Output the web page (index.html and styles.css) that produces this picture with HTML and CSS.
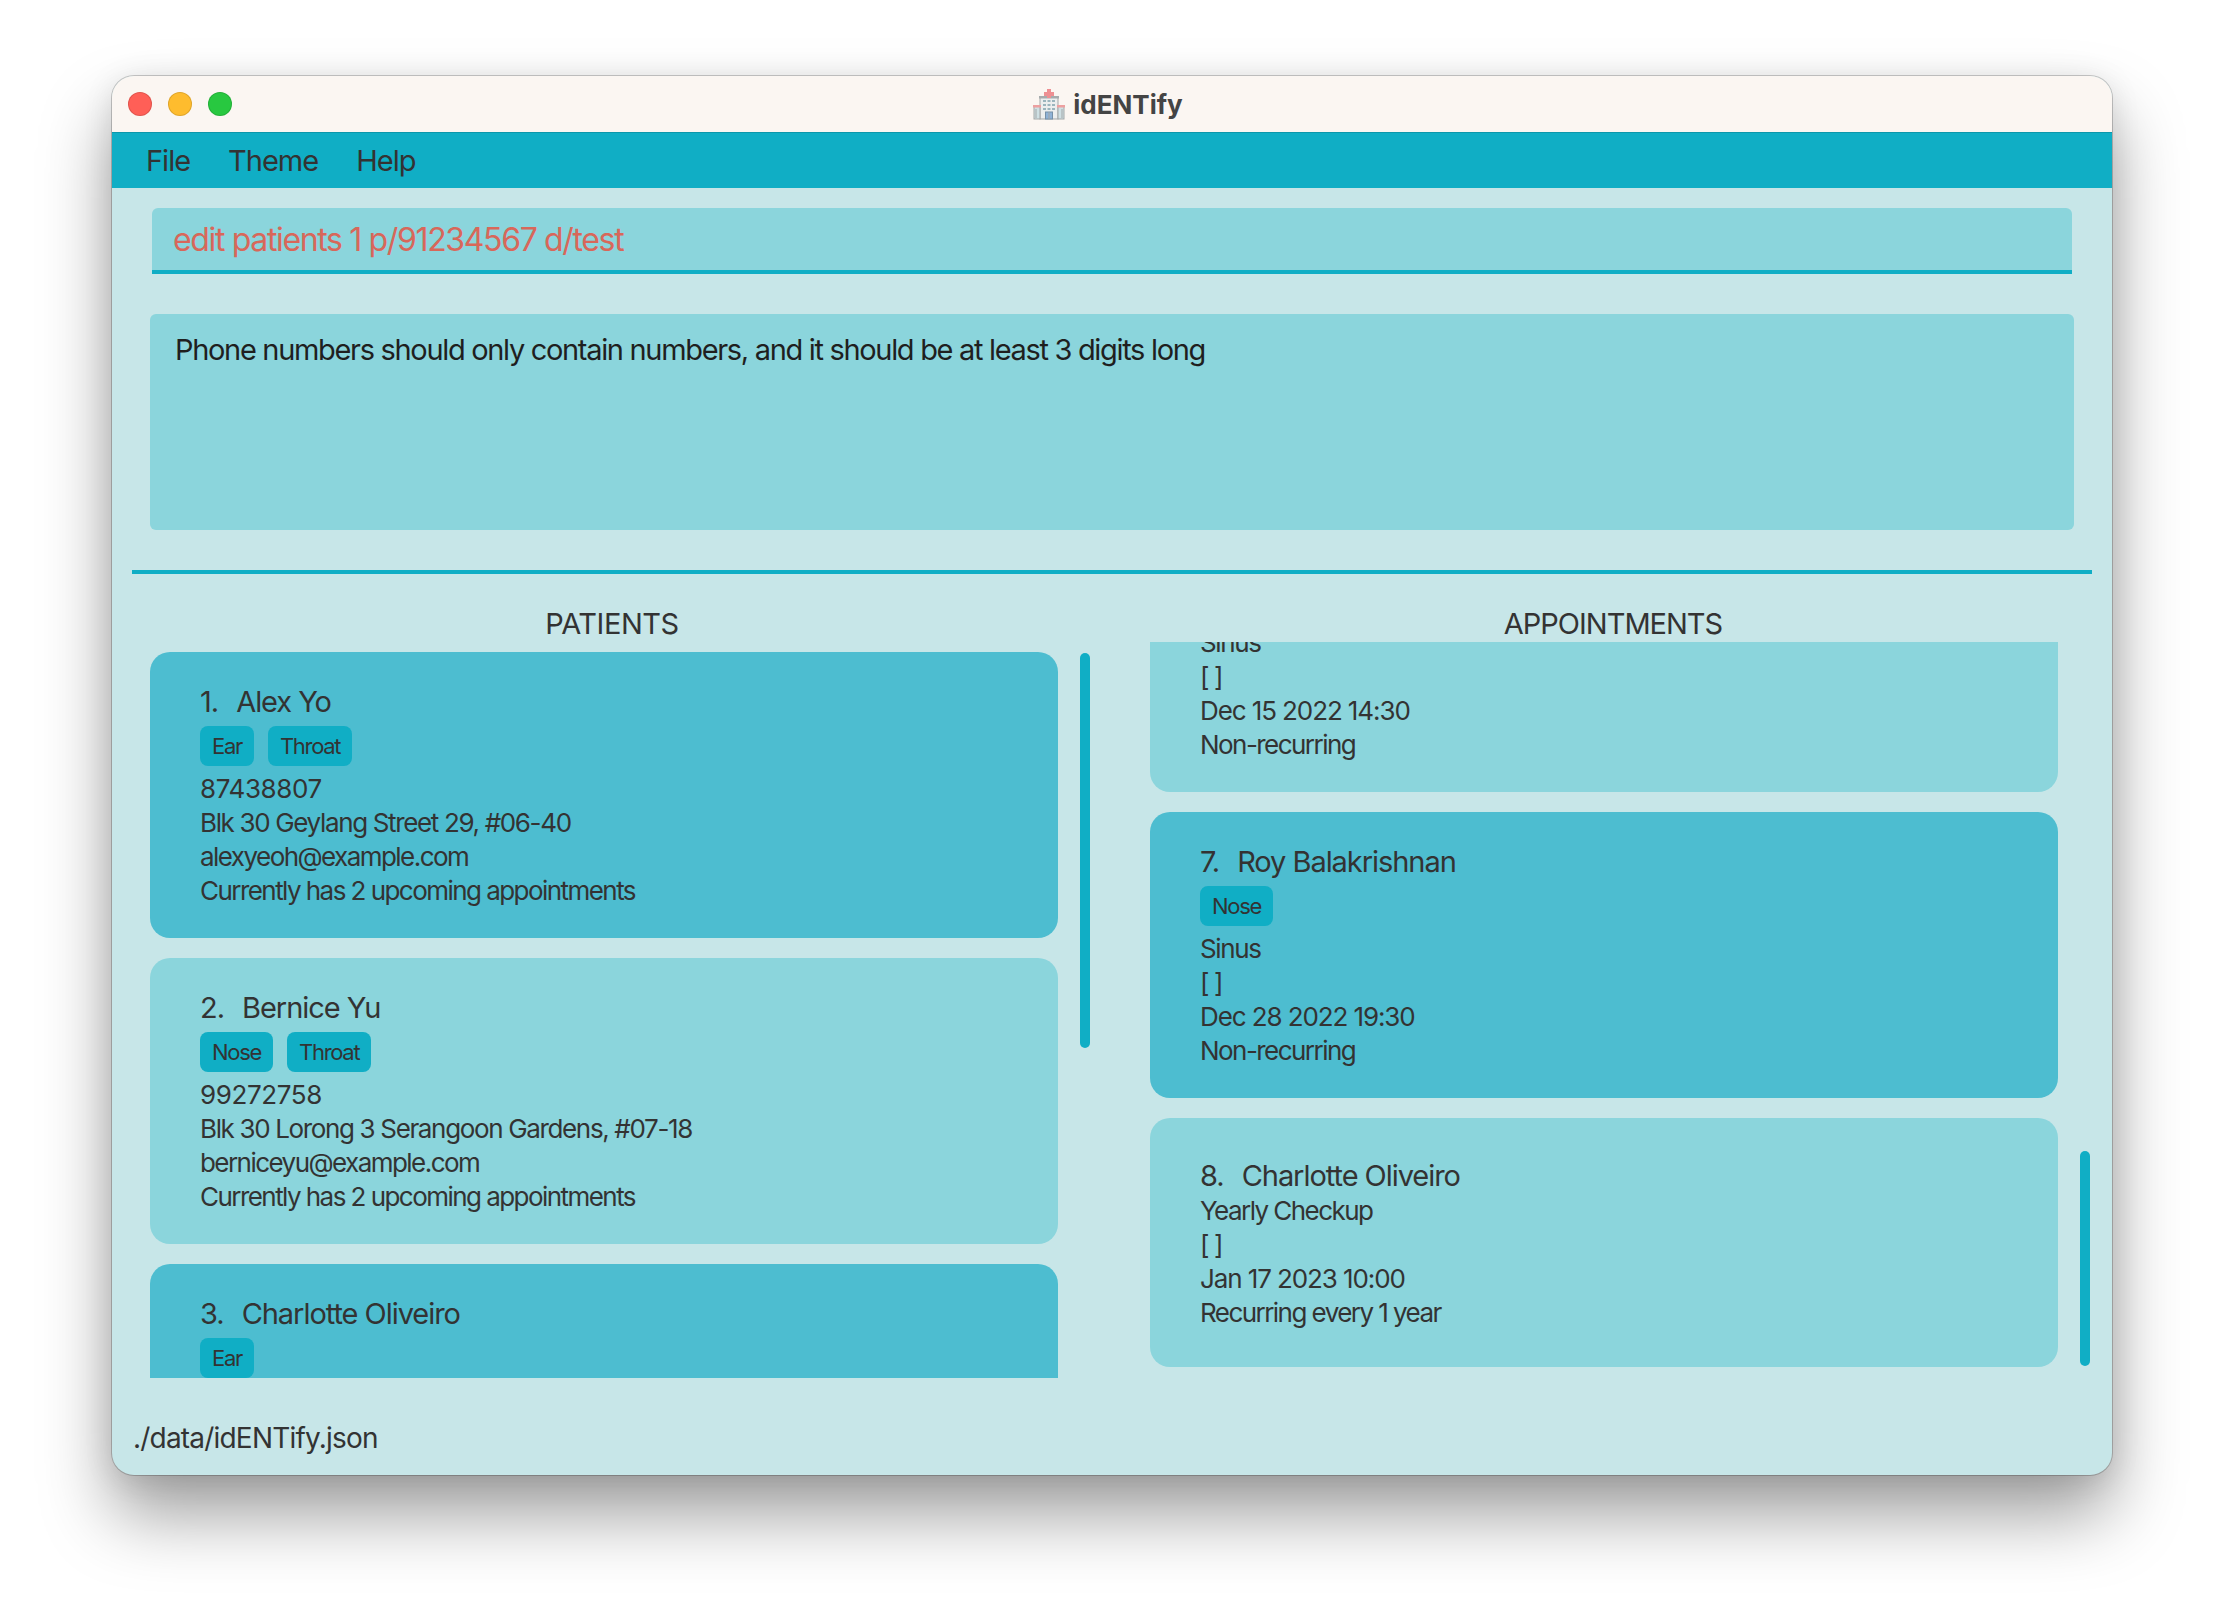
FILE: index.html
```html
<!DOCTYPE html>
<html lang="en">
<head>
<meta charset="utf-8">
<title>idENTify</title>
<link rel="stylesheet" href="styles.css">
</head>
<body>
<div class="window">
  <header class="titlebar">
    <div class="lights">
      <span class="light light-red"></span>
      <span class="light light-yellow"></span>
      <span class="light light-green"></span>
    </div>
    <div class="title">
      <svg class="title-icon" viewBox="0 0 32 32" width="32" height="32" aria-hidden="true">
        <rect x="7" y="9" width="18" height="22" fill="#eceeee" stroke="#a3a7a8"/>
        <rect x="1" y="18" width="6" height="13" fill="#cfe0e4" stroke="#a3a7a8"/>
        <rect x="25" y="18" width="6" height="13" fill="#cfe0e4" stroke="#a3a7a8"/>
        <rect x="0" y="17" width="8" height="2.5" fill="#eda0a0"/>
        <rect x="24" y="17" width="8" height="2.5" fill="#eda0a0"/>
        <rect x="6" y="8" width="20" height="2.5" fill="#a6abad"/>
        <path d="M14 1h4v3h3v4h-3v2h-4V8h-3V4h3z" fill="#ee8f92"/>
        <g fill="#9bb5bd">
          <rect x="10" y="12" width="3" height="2"/><rect x="14.5" y="12" width="3" height="2"/><rect x="19" y="12" width="3" height="2"/>
          <rect x="10" y="16" width="3" height="2"/><rect x="14.5" y="16" width="3" height="2"/><rect x="19" y="16" width="3" height="2"/>
          <rect x="10" y="20" width="3" height="2"/><rect x="14.5" y="20" width="3" height="2"/><rect x="19" y="20" width="3" height="2"/>
        </g>
        <rect x="12.5" y="24" width="7" height="7" fill="#8fb2d6" stroke="#7590a8"/>
        <path d="M3 21v9M29 21v9M16 24v7" stroke="#a3a7a8" fill="none"/>
      </svg>
      <span class="title-text">idENTify</span>
    </div>
    <div></div>
  </header>

  <nav class="menubar">
    <span class="menu-item">File</span>
    <span class="menu-item">Theme</span>
    <span class="menu-item">Help</span>
  </nav>

  <main class="content">
    <div class="command">edit patients 1 p/91234567 d/test</div>
    <div class="result">Phone numbers should only contain numbers, and it should be at least 3 digits long</div>
    <div class="divider"></div>

    <div class="panels">
      <section class="panel">
        <h2 class="panel-title">PATIENTS</h2>
        <div class="panel-body panel-body-left">
          <div class="list list-left">
            <article class="card card-dark">
              <div class="card-name"><span class="card-num">1.</span> Alex Yo</div>
              <div class="tags"><span class="tag">Ear</span><span class="tag">Throat</span></div>
              <div class="line line-digits">87438807</div>
              <div class="line line-mixed">Blk 30 Geylang Street 29, #06-40</div>
              <div class="line">alexyeoh@example.com</div>
              <div class="line">Currently has 2 upcoming appointments</div>
            </article>
            <article class="card card-light">
              <div class="card-name"><span class="card-num">2.</span> Bernice Yu</div>
              <div class="tags"><span class="tag">Nose</span><span class="tag">Throat</span></div>
              <div class="line line-digits">99272758</div>
              <div class="line line-mixed">Blk 30 Lorong 3 Serangoon Gardens, #07-18</div>
              <div class="line">berniceyu@example.com</div>
              <div class="line">Currently has 2 upcoming appointments</div>
            </article>
            <article class="card card-dark">
              <div class="card-name"><span class="card-num">3.</span> Charlotte Oliveiro</div>
              <div class="tags"><span class="tag">Ear</span></div>
            </article>
          </div>
          <div class="thumb thumb-left"></div>
        </div>
      </section>

      <section class="panel">
        <h2 class="panel-title panel-title-right">APPOINTMENTS</h2>
        <div class="panel-body panel-body-right">
          <div class="list list-right">
            <article class="card card-light">
              <div class="line line-mixed">Sinus</div>
              <div class="line line-mixed">[ ]</div>
              <div class="line line-date">Dec 15 2022 14:30</div>
              <div class="line">Non-recurring</div>
            </article>
            <article class="card card-dark">
              <div class="card-name"><span class="card-num">7.</span> Roy Balakrishnan</div>
              <div class="tags"><span class="tag">Nose</span></div>
              <div class="line line-mixed">Sinus</div>
              <div class="line line-mixed">[ ]</div>
              <div class="line line-date">Dec 28 2022 19:30</div>
              <div class="line">Non-recurring</div>
            </article>
            <article class="card card-light card-plain">
              <div class="card-name"><span class="card-num">8.</span> Charlotte Oliveiro</div>
              <div class="line">Yearly Checkup</div>
              <div class="line line-mixed">[ ]</div>
              <div class="line line-date">Jan 17 2023 10:00</div>
              <div class="line">Recurring every 1 year</div>
            </article>
          </div>
          <div class="thumb thumb-right"></div>
        </div>
      </section>
    </div>

    <footer class="status">./data/idENTify.json</footer>
  </main>
</div>
</body>
</html>
```
FILE: styles.css
```css
* { box-sizing: border-box; }

html, body { margin: 0; padding: 0; }

body {
  width: 2224px;
  height: 1624px;
  background: #ffffff;
  padding-top: 76px;
  display: flex;
  justify-content: center;
  align-items: flex-start;
  overflow: hidden;
  font-family: Inter, "Liberation Sans", sans-serif;
  color: #333333;
}

.window {
  width: 2000px;
  height: 1399px;
  border-radius: 22px;
  overflow: hidden;
  display: flex;
  flex-direction: column;
  background: #c7e6e8;
  box-shadow: 0 0 0 1px rgba(0, 0, 0, 0.2), 0 40px 70px rgba(0, 0, 0, 0.38), 0 4px 30px rgba(0, 0, 0, 0.1);
}

.titlebar {
  height: 56px;
  flex: none;
  background: #fbf6f2;
  display: grid;
  grid-template-columns: 1fr auto 1fr;
  align-items: center;
  padding-left: 16px;
}

.lights { display: flex; gap: 16px; }

.light {
  width: 24px;
  height: 24px;
  border-radius: 50%;
  box-shadow: inset 0 0 0 1px rgba(0, 0, 0, 0.12);
}
.light-red { background: #ff5f57; }
.light-yellow { background: #febc2e; }
.light-green { background: #28c840; }

.title {
  display: flex;
  align-items: center;
  gap: 8px;
  margin-right: 24px;
}

.title-icon { display: block; }

.title-text {
  font-size: 26px;
  font-weight: 700;
  color: #444444;
  letter-spacing: 0;
}

.menubar {
  height: 56px;
  flex: none;
  background: #10aec5;
  border-top: 1px solid #0c97ab;
  display: flex;
  align-items: center;
  padding-left: 34px;
  gap: 38px;
}

.menu-item {
  font-size: 29px;
  letter-spacing: -1px;
  color: #333333;
}

.content {
  flex: 1;
  min-height: 0;
  display: flex;
  flex-direction: column;
}

.command {
  height: 66px;
  margin: 20px 40px 0;
  padding-left: 21px;
  background: #8bd5dc;
  border-bottom: 4px solid #10aec5;
  border-radius: 6px 6px 0 0;
  font-size: 32px;
  letter-spacing: -1.35px;
  line-height: 64px;
  color: #d8675a;
}

.result {
  height: 216px;
  margin: 40px 38px 0;
  padding: 18px 25px;
  background: #8bd5dc;
  border-radius: 6px;
  font-size: 29px;
  letter-spacing: -1.32px;
  line-height: 36px;
  color: #1f1f1f;
}

.divider {
  height: 4px;
  margin: 40px 20px 0;
  background: #10aec5;
  flex: none;
}

.panels {
  display: grid;
  grid-template-columns: 940px 940px;
  column-gap: 60px;
  margin: 32px 0 0 38px;
}

.panel { min-width: 0; }

.panel-title {
  margin: 0;
  height: 36px;
  padding-right: 16px;
  font-size: 29px;
  font-weight: 400;
  line-height: 36px;
  letter-spacing: -0.45px;
  text-align: center;
  color: #333333;
}

.panel-title-right { padding-right: 14px; letter-spacing: -1px; }

.panel-body {
  display: flex;
  justify-content: space-between;
}

.panel-body-left { margin-top: 10px; }

.list {
  width: 908px;
  display: flex;
  flex-direction: column;
  gap: 20px;
  overflow: hidden;
}

.list-left { height: 726px; }

.list-right {
  height: 736px;
  padding-bottom: 11px;
  justify-content: flex-end;
}

.card {
  flex: none;
  padding: 32px 50px 30px;
  border-radius: 20px;
}

.card-plain { padding-top: 40px; padding-bottom: 37px; }

.card-dark { background: #4dbdd0; }
.card-light { background: #8bd5dc; }

.card-name {
  font-size: 29px;
  letter-spacing: -1.05px;
  line-height: 36px;
  color: #333333;
}

.card-num { margin-right: 11px; }

.tags {
  display: flex;
  gap: 14px;
  margin: 6px 0;
}

.tag {
  height: 40px;
  padding: 0 12px;
  border-radius: 8px;
  background: #10aec5;
  font-size: 22px;
  letter-spacing: -1.3px;
  line-height: 40px;
  color: #333333;
}

.line {
  font-size: 26px;
  letter-spacing: -1.55px;
  line-height: 34px;
  color: #333333;
}

.line-digits { letter-spacing: -0.4px; }
.line-mixed { letter-spacing: -1.35px; }
.line-date { letter-spacing: -1.1px; }

.thumb {
  width: 10px;
  border-radius: 5px;
  background: #10aec5;
  flex: none;
}

.thumb-left { height: 395px; margin-top: 1px; }
.thumb-right { height: 215px; align-self: flex-end; margin-bottom: 12px; }

.status {
  margin-top: 43px;
  padding-left: 21px;
  font-size: 28px;
  letter-spacing: -0.8px;
  line-height: 34px;
  color: #333333;
}
```
